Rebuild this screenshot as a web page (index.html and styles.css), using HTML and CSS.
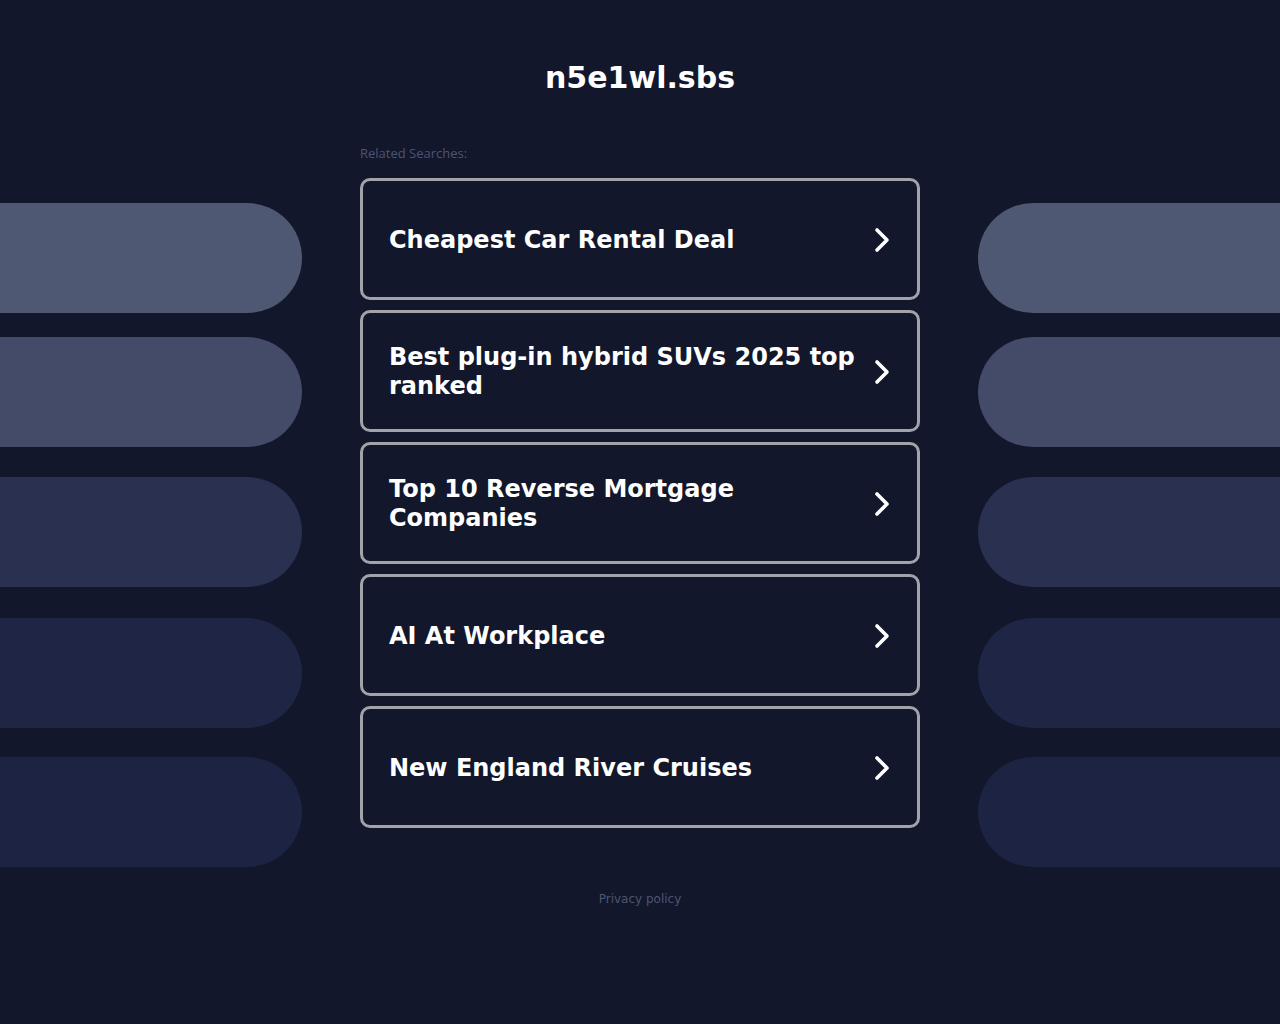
FILE: index.html
```html
<!DOCTYPE html>
<html lang="en">
<head>
<meta charset="utf-8">
<title>n5e1wl.sbs</title>
<link rel="stylesheet" href="styles.css">
</head>
<body>
<header class="top">
  <h1 class="domain">n5e1wl.sbs</h1>
</header>
<div class="layout">
  <div class="side side-left">
    <div class="pill p1"></div>
    <div class="pill p2"></div>
    <div class="pill p3"></div>
    <div class="pill p4"></div>
    <div class="pill p5"></div>
  </div>
  <main class="center">
    <p class="label">Related Searches:</p>
    <ul class="links">
      <li><a class="card" href="#"><span class="card-text">Cheapest Car Rental Deal</span><svg class="chev" viewBox="0 0 20 26" width="20" height="26"><path d="M5 3 L15 13 L5 23" fill="none" stroke="#fff" stroke-width="3.6" stroke-linecap="round" stroke-linejoin="round"/></svg></a></li>
      <li><a class="card" href="#"><span class="card-text">Best plug-in hybrid SUVs 2025 top ranked</span><svg class="chev" viewBox="0 0 20 26" width="20" height="26"><path d="M5 3 L15 13 L5 23" fill="none" stroke="#fff" stroke-width="3.6" stroke-linecap="round" stroke-linejoin="round"/></svg></a></li>
      <li><a class="card" href="#"><span class="card-text">Top 10 Reverse Mortgage Companies</span><svg class="chev" viewBox="0 0 20 26" width="20" height="26"><path d="M5 3 L15 13 L5 23" fill="none" stroke="#fff" stroke-width="3.6" stroke-linecap="round" stroke-linejoin="round"/></svg></a></li>
      <li><a class="card" href="#"><span class="card-text">AI At Workplace</span><svg class="chev" viewBox="0 0 20 26" width="20" height="26"><path d="M5 3 L15 13 L5 23" fill="none" stroke="#fff" stroke-width="3.6" stroke-linecap="round" stroke-linejoin="round"/></svg></a></li>
      <li><a class="card" href="#"><span class="card-text">New England River Cruises</span><svg class="chev" viewBox="0 0 20 26" width="20" height="26"><path d="M5 3 L15 13 L5 23" fill="none" stroke="#fff" stroke-width="3.6" stroke-linecap="round" stroke-linejoin="round"/></svg></a></li>
    </ul>
    <footer class="foot"><a href="#" class="privacy">Privacy policy</a></footer>
  </main>
  <div class="side side-right">
    <div class="pill p1"></div>
    <div class="pill p2"></div>
    <div class="pill p3"></div>
    <div class="pill p4"></div>
    <div class="pill p5"></div>
  </div>
</div>
</body>
</html>
```
FILE: styles.css
```css
html, body {
  margin: 0;
  padding: 0;
  background: #12172b;
  font-family: "DejaVu Sans", "Liberation Sans", sans-serif;
  color: #fff;
  min-height: 1024px;
}

.top {
  padding-top: 59px;
  text-align: center;
}

.domain {
  margin: 0;
  font-size: 30px;
  line-height: 38px;
  font-weight: bold;
  color: #fff;
}

.layout {
  display: grid;
  grid-template-columns: 302px 560px 302px;
  column-gap: 58px;
  margin-top: 6px;
}

.side {
  display: flex;
  flex-direction: column;
  padding-top: 100px;
}

.pill {
  height: 110px;
  background: #4f5873;
}
.side-left .pill { border-radius: 0 55px 55px 0; }
.side-right .pill { border-radius: 55px 0 0 55px; }

.p1 { background: #4f5873; }
.p2 { background: #434b68; margin-top: 24px; }
.p3 { background: #2a3150; margin-top: 30px; }
.p4 { background: #1f2645; margin-top: 31px; }
.p5 { background: #1d2443; margin-top: 29px; }

.center {
  display: flex;
  flex-direction: column;
}

.label {
  margin: 42px 0 0;
  font-size: 13px;
  line-height: 16px;
  color: #4d5573;
  font-family: "Open Sans", "DejaVu Sans", sans-serif;
}

.links {
  list-style: none;
  margin: 17px 0 0;
  padding: 0;
  display: flex;
  flex-direction: column;
  gap: 10px;
}

.card {
  box-sizing: border-box;
  height: 122px;
  display: flex;
  align-items: center;
  justify-content: space-between;
  gap: 8px;
  padding: 2px 25px 0 26px;
  border: 3px solid #a2a2aa;
  border-radius: 10px;
  background: #12172b;
  text-decoration: none;
  color: #fff;
}

.card-text {
  font-size: 24px;
  line-height: 29px;
  font-weight: bold;
}

.chev {
  flex: none;
}

.foot {
  margin-top: 60px;
  text-align: center;
}

.privacy {
  font-size: 12px;
  line-height: 16px;
  color: #4d5573;
  text-decoration: none;
}
```
